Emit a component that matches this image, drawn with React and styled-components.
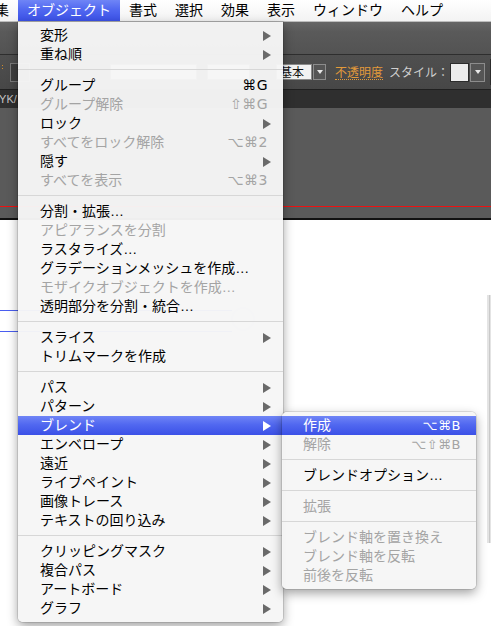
import React from 'react';
import styled, { createGlobalStyle } from 'styled-components';

const GlobalStyle = createGlobalStyle`
  html, body {
    margin: 0;
    padding: 0;
    width: 491px;
    height: 626px;
    overflow: hidden;
    background: #ffffff;
  }
  #root { width: 491px; height: 626px; }
`;

const UI_FONT = `"Liberation Sans", "Noto Sans CJK JP", sans-serif`;
const KEY_FONT = `"DejaVu Sans", "Noto Sans CJK JP", sans-serif`;
const HILITE = `linear-gradient(180deg, #6f85f6 0%, #5168f0 45%, #3b51e7 100%)`;

const Screen = styled.div`
  position: relative;
  width: 491px;
  height: 626px;
  overflow: hidden;
  display: flex;
  flex-direction: column;
  font-family: ${UI_FONT};
`;

/* ---------- system menu bar ---------- */
const MenuBar = styled.div`
  flex: none;
  height: 21px;
  display: flex;
  align-items: stretch;
  background: linear-gradient(180deg, #ffffff 0%, #f3f3f3 100%);
  border-bottom: 1px solid #bdbdbd;
  white-space: nowrap;
`;

const MenuTitle = styled.div`
  flex: none;
  padding: 0 9px;
  margin-left: ${(p) => p.$offset || 0}px;
  font-size: 14px;
  line-height: 21px;
  color: ${(p) => (p.$active ? '#fff' : '#000')};
  background: ${(p) => (p.$active ? HILITE : 'transparent')};
`;

/* ---------- Illustrator workspace (background) ---------- */
const Workspace = styled.div`
  flex: 1;
  display: flex;
  flex-direction: column;
  min-height: 0;
`;

const AppBar = styled.div`
  flex: none;
  height: 32px;
  background: linear-gradient(180deg, #666666 0%, #5a5a5a 30%, #535353 100%);
  border-bottom: 1px solid #2e2e2e;
`;

const ControlBar = styled.div`
  flex: none;
  height: 34px;
  display: flex;
  align-items: center;
  background: linear-gradient(180deg, #4f4f4f 0%, #474747 100%);
  border-bottom: 1px solid #202020;
  white-space: nowrap;
`;

const Gripper = styled.div`
  flex: none;
  width: 3px;
  height: 6px;
  margin-left: 1px;
  margin-top: -10px;
  background-image: radial-gradient(circle, #d08a2a 0.8px, transparent 1px);
  background-size: 3px 3px;
`;

const Spinner = styled.div`
  flex: none;
  width: 20px;
  height: 19px;
  margin-left: 6px;
  box-sizing: border-box;
  border: 1px solid #7a7a7a;
  background: #3e3e3e;
`;

const Field = styled.div`
  flex: none;
  box-sizing: border-box;
  height: 16px;
  width: ${(p) => p.$w}px;
  margin-left: ${(p) => p.$ml}px;
  background: #f2f2f2;
  border: 1px solid #8a8a8a;
  font-family: "Noto Sans CJK JP", sans-serif;
  font-size: 12px;
  line-height: 14px;
  color: #111;
  padding-left: 3px;
  overflow: hidden;
`;

const DropButton = styled.div`
  flex: none;
  box-sizing: border-box;
  width: ${(p) => p.$w}px;
  height: ${(p) => p.$h || 16}px;
  margin-left: 1px;
  background: #555;
  border: 1px solid #8c8c8c;
  display: flex;
  align-items: center;
  justify-content: center;
  &::after {
    content: '';
    border-left: 3px solid transparent;
    border-right: 3px solid transparent;
    border-top: 4px solid #e8e8e8;
  }
`;

const OpacityLink = styled.div`
  flex: none;
  margin-left: 9px;
  font-family: "Noto Sans CJK JP", sans-serif;
  font-size: 12px;
  line-height: 14px;
  color: #e39a3a;
  border-bottom: 1px dotted #e39a3a;
`;

const ControlLabel = styled.div`
  flex: none;
  margin-left: 6px;
  font-family: "Noto Sans CJK JP", sans-serif;
  font-size: 12px;
  line-height: 14px;
  color: #cfcfcf;
`;

const Swatch = styled.div`
  flex: none;
  box-sizing: border-box;
  width: 19px;
  height: 19px;
  margin-left: 1px;
  background: #ececec;
  border: 1px solid #2c2c2c;
`;

const BarDivider = styled.div`
  flex: none;
  width: 1px;
  height: 26px;
  margin-left: 5px;
  background: #2c2c2c;
  box-shadow: 1px 0 0 #5e5e5e;
`;

const DocTabs = styled.div`
  flex: none;
  height: 18px;
  background: #2f2f2f;
  display: flex;
  align-items: center;
  white-space: nowrap;
  overflow: hidden;
`;

const DocTab = styled.div`
  flex: none;
  margin-left: -18px;
  font-size: 11px;
  line-height: 14px;
  color: #c4c4c4;
`;

const DocFrame = styled.div`
  flex: none;
  height: 110px;
  background: #5a5a5a;
  border-bottom: 2px solid #111;
  display: flex;
  flex-direction: column;
  justify-content: flex-end;
`;

const GuideLine = styled.div`
  height: 1px;
  margin-bottom: 11px;
  background: #ee1111;
`;

const Canvas = styled.div`
  flex: 1;
  background: #ffffff;
  min-height: 0;
`;

const CanvasArt = styled.svg`
  display: block;
`;

/* ---------- pull-down menus ---------- */
const MenuPanel = styled.div`
  position: absolute;
  left: ${(p) => p.$x}px;
  top: ${(p) => p.$y}px;
  width: ${(p) => p.$w}px;
  padding: 4px 0;
  background: rgba(246, 246, 246, 0.97);
  border-radius: ${(p) => (p.$sub ? '5px' : '0 0 5px 5px')};
  box-shadow: 0 4px 11px rgba(0, 0, 0, 0.38), 0 0 0 1px rgba(0, 0, 0, 0.1);
  z-index: ${(p) => (p.$sub ? 3 : 2)};
`;

const Row = styled.div`
  display: flex;
  align-items: center;
  height: 19px;
  padding: 0 ${(p) => p.$pr}px 0 ${(p) => p.$pl}px;
  font-size: 14px;
  line-height: 19px;
  white-space: nowrap;
  color: ${(p) => (p.$active ? '#fff' : p.$disabled ? '#a4a4a4' : '#000')};
  background: ${(p) => (p.$active ? HILITE : 'transparent')};
`;

const Label = styled.span`
  flex: 1;
`;

const Keys = styled.span`
  flex: none;
  font-family: ${KEY_FONT};
  font-size: ${(p) => p.$size}px;
  letter-spacing: 0.5px;
  margin-right: 3px;
`;

const Arrow = styled.svg`
  flex: none;
  display: block;
  fill: ${(p) => (p.$active ? '#fff' : '#6a6a6a')};
`;

const Separator = styled.div`
  height: 1px;
  margin: 5px 0 6px;
  background: #d7d7d7;
`;

const MENUBAR = ['編集', 'オブジェクト', '書式', '選択', '効果', '表示', 'ウィンドウ', 'ヘルプ'];

const MAIN_ITEMS = [
  { t: '変形', sub: true },
  { t: '重ね順', sub: true },
  '-',
  { t: 'グループ', k: '⌘G' },
  { t: 'グループ解除', k: '⇧⌘G', d: true },
  { t: 'ロック', sub: true },
  { t: 'すべてをロック解除', k: '⌥⌘2', d: true },
  { t: '隠す', sub: true },
  { t: 'すべてを表示', k: '⌥⌘3', d: true },
  '-',
  { t: '分割・拡張…' },
  { t: 'アピアランスを分割', d: true },
  { t: 'ラスタライズ…' },
  { t: 'グラデーションメッシュを作成…' },
  { t: 'モザイクオブジェクトを作成…', d: true },
  { t: '透明部分を分割・統合…' },
  '-',
  { t: 'スライス', sub: true },
  { t: 'トリムマークを作成' },
  '-',
  { t: 'パス', sub: true },
  { t: 'パターン', sub: true },
  { t: 'ブレンド', sub: true, a: true },
  { t: 'エンベロープ', sub: true },
  { t: '遠近', sub: true },
  { t: 'ライブペイント', sub: true },
  { t: '画像トレース', sub: true },
  { t: 'テキストの回り込み', sub: true },
  '-',
  { t: 'クリッピングマスク', sub: true },
  { t: '複合パス', sub: true },
  { t: 'アートボード', sub: true },
  { t: 'グラフ', sub: true },
];

const BLEND_ITEMS = [
  { t: '作成', k: '⌥⌘B', a: true },
  { t: '解除', k: '⌥⇧⌘B', d: true },
  '-',
  { t: 'ブレンドオプション…' },
  '-',
  { t: '拡張', d: true },
  '-',
  { t: 'ブレンド軸を置き換え', d: true },
  { t: 'ブレンド軸を反転', d: true },
  { t: '前後を反転', d: true },
];

function SubArrow({ active }) {
  return (
    <Arrow $active={active} width="8" height="10" viewBox="0 0 8 10">
      <polygon points="0,0 8,5 0,10" />
    </Arrow>
  );
}

function Menu({ items, x, y, w, sub, pl, pr, keySize }) {
  return (
    <MenuPanel $x={x} $y={y} $w={w} $sub={sub}>
      {items.map((it, i) =>
        it === '-' ? (
          <Separator key={i} />
        ) : (
          <Row key={i} $pl={pl} $pr={pr} $disabled={it.d} $active={it.a}>
            <Label>{it.t}</Label>
            {it.k && <Keys $size={keySize}>{it.k}</Keys>}
            {it.sub && <SubArrow active={it.a} />}
          </Row>
        )
      )}
    </MenuPanel>
  );
}

export default function App() {
  return (
    <>
      <GlobalStyle />
      <Screen>
        <MenuBar>
          {MENUBAR.map((m, i) => (
            <MenuTitle key={m} $offset={i === 0 ? -28 : 0} $active={m === 'オブジェクト'}>
              {m}
            </MenuTitle>
          ))}
        </MenuBar>

        <Workspace>
          <AppBar />
          <ControlBar>
            <Gripper />
            <Spinner />
            <Field $w={87} $ml={80} />
            <Field $w={43} $ml={10} />
            <Field $w={36} $ml={26}>基本</Field>
            <DropButton $w={13} />
            <OpacityLink>不透明度</OpacityLink>
            <ControlLabel>スタイル：</ControlLabel>
            <Swatch />
            <DropButton $w={15} $h={19} />
            <BarDivider />
          </ControlBar>
          <DocTabs>
            <DocTab>CMYK/</DocTab>
          </DocTabs>
          <DocFrame>
            <GuideLine />
          </DocFrame>
          <Canvas>
            <CanvasArt width="491" height="406" viewBox="0 0 491 406">
              <line x1="0" y1="90.5" x2="232" y2="90.5" stroke="#4a5ef0" strokeWidth="1" />
              <line x1="0" y1="111.5" x2="232" y2="111.5" stroke="#4a5ef0" strokeWidth="1" />
              <circle cx="243" cy="99" r="11" fill="none" stroke="#c8d2f6" strokeWidth="2" />
              <rect x="487" y="75" width="4" height="248" fill="#e4e4e4" />
              <rect x="489" y="75" width="1" height="248" fill="#c9c9c9" />
            </CanvasArt>
          </Canvas>
        </Workspace>

        <Menu items={MAIN_ITEMS} x={18} y={22} w={265} pl={22} pr={12} keySize={14} />
        <Menu items={BLEND_ITEMS} x={282} y={412} w={194} sub pl={21} pr={12} keySize={13} />
      </Screen>
    </>
  );
}
